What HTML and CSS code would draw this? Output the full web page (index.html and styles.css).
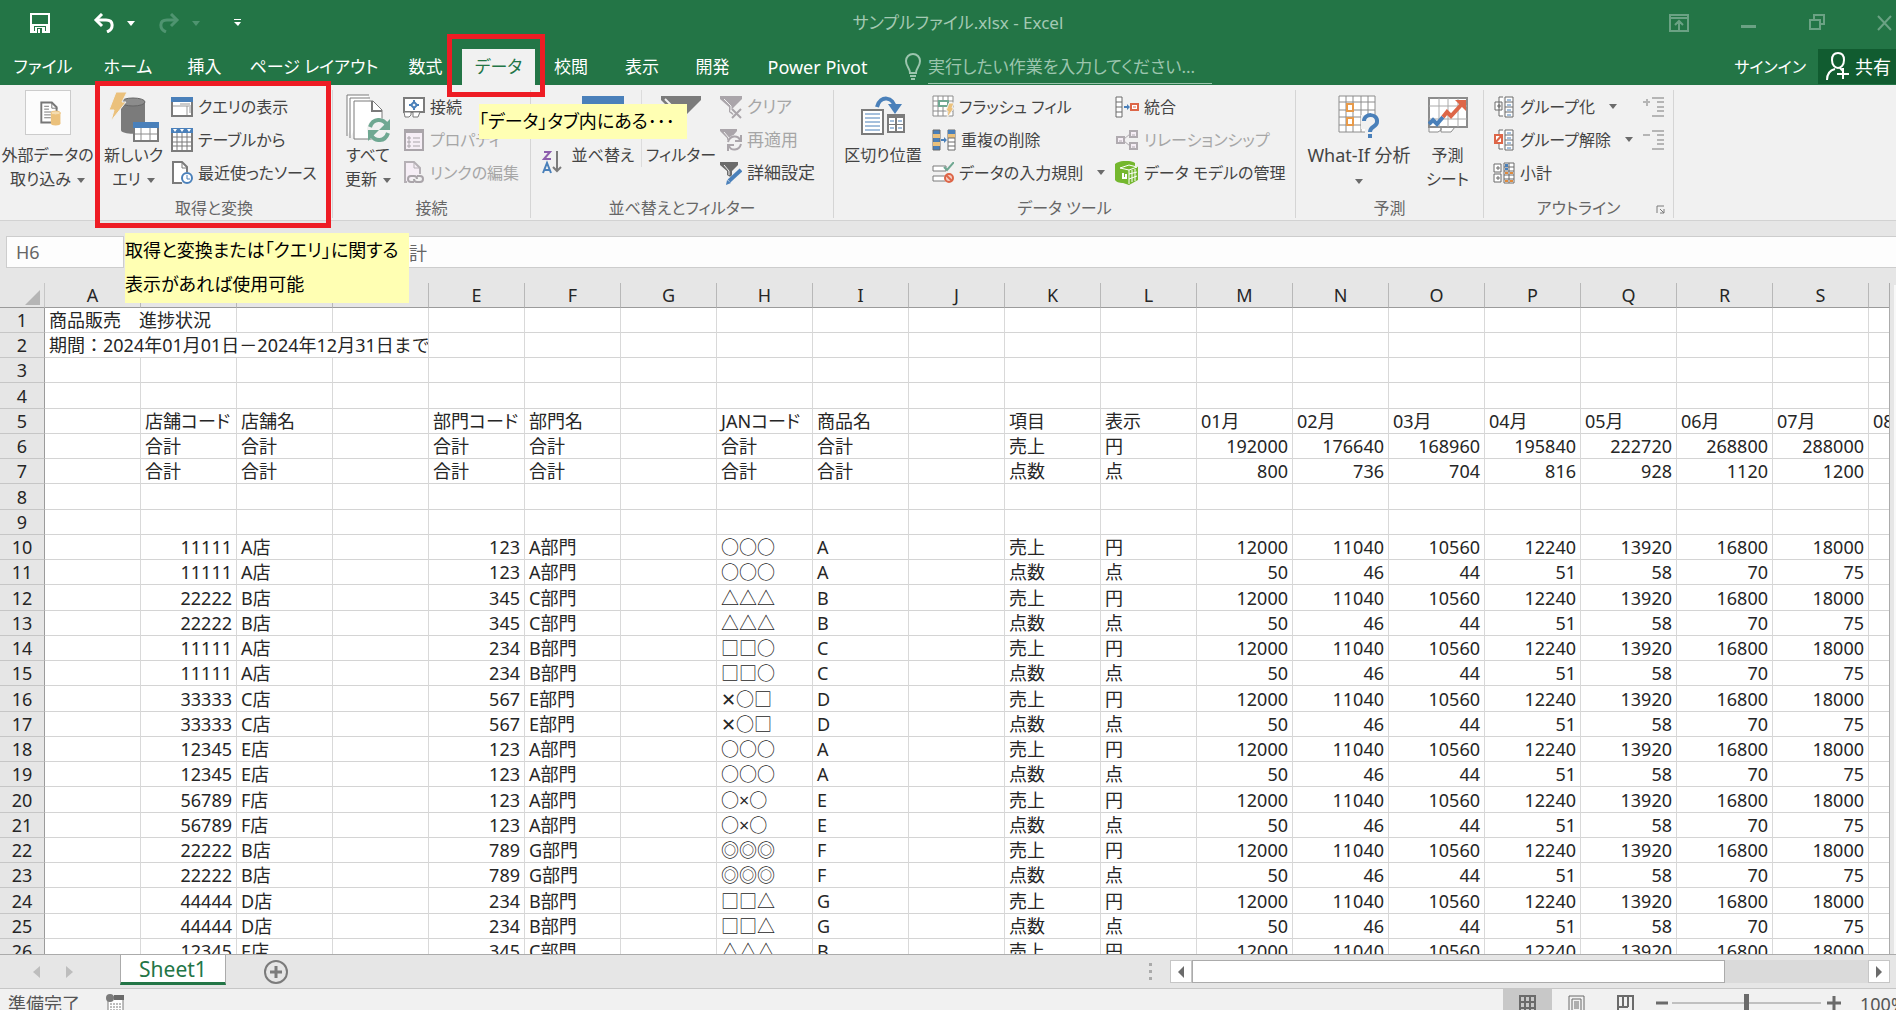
FILE: index.html
```html
<!DOCTYPE html>
<html lang="ja">

<head>
    <meta charset="UTF-8">
    <meta name="viewport" content="width=device-width, initial-scale=1.0">
    <title>サンプルファイル.xlsx - Excel</title>
    <link rel="stylesheet" href="styles.css">
</head>

<body>
    <!-- Title bar -->
    <header class="title-bar">
        <div class="quick-access">
            <button class="qa-button qa-save" aria-label="上書き保存">
                <svg width="20" height="20" viewBox="0 0 20 20"><path fill="none" stroke="#fff" stroke-width="2" d="M1 1h18v18H1z"/><path fill="#fff" d="M1 11h3v9H1zM16 11h3v9h-3zM1 11h18v2H1zM5 14h10v6H5z"/><path fill="#237546" d="M7 15h5v5H7z"/><path fill="#fff" d="M8 16h2v4H8z"/></svg>
            </button>
            <button class="qa-button qa-undo" aria-label="元に戻す">
                <svg width="22" height="20" viewBox="0 0 22 20"><path fill="none" stroke="#fff" stroke-width="3" d="M3 7h10c8 0 8 9 1 12"/><path fill="none" stroke="#fff" stroke-width="3" d="M9 1L3 7l6 6"/></svg>
                <svg width="8" height="5" viewBox="0 0 8 5"><path fill="#fff" d="M0 0h8L4 5z"/></svg>
            </button>
            <button class="qa-button qa-redo" aria-label="やり直し">
                <svg width="22" height="20" viewBox="0 0 22 20"><path fill="none" stroke="#4f9470" stroke-width="3" d="M19 7H9C1 7 1 16 8 19"/><path fill="none" stroke="#4f9470" stroke-width="3" d="M13 1l6 6-6 6"/></svg>
                <svg width="8" height="5" viewBox="0 0 8 5"><path fill="#4f9470" d="M0 0h8L4 5z"/></svg>
            </button>
            <button class="qa-button" aria-label="カスタマイズ">
                <svg width="8" height="8" viewBox="0 0 8 8"><path fill="#fff" d="M0 0h7v1H0zM0 3h7L4 7z"/></svg>
            </button>
        </div>
        <div class="file-title">サンプルファイル.xlsx - Excel</div>
        <div class="window-buttons">
            <button aria-label="リボンの表示オプション">
                <svg width="20" height="18" viewBox="0 0 20 18"><path fill="none" stroke="#6ba284" stroke-width="2" d="M1 1h18v16H1zM1 4h18M10 17V7M6 11l4-4 4 4"/></svg>
            </button>
            <button aria-label="最小化">
                <svg width="16" height="18" viewBox="0 0 16 18"><path fill="#6ba284" d="M0 11h15v3H0z"/></svg>
            </button>
            <button aria-label="元のサイズに戻す">
                <svg width="16" height="18" viewBox="0 0 16 18"><path fill="none" stroke="#6ba284" stroke-width="2" d="M1 6h10v9H1zM5 6V1h10v9h-4"/></svg>
            </button>
            <button aria-label="閉じる">
                <svg width="16" height="18" viewBox="0 0 16 18"><path fill="none" stroke="#6ba284" stroke-width="2" d="M1 2l13 14M14 2L1 16"/></svg>
            </button>
        </div>
    </header>

    <!-- Ribbon tabs -->
    <div class="tab-bar">
        <nav class="tabs">
            <button class="tab">ファイル</button>
            <button class="tab">ホーム</button>
            <button class="tab">挿入</button>
            <button class="tab">ページ レイアウト</button>
            <button class="tab">数式</button>
            <button class="tab active">データ</button>
            <button class="tab">校閲</button>
            <button class="tab">表示</button>
            <button class="tab">開発</button>
            <button class="tab latin">Power Pivot</button>
        </nav>
        <label class="tell-me">
            <svg width="16" height="28" viewBox="0 0 16 28"><path fill="none" stroke="#9cc5ae" stroke-width="2" d="M5 20c0-5-4-6-4-12a7 7 0 0 1 14 0c0 6-4 7-4 12zM5 23h6M6 26h4"/></svg>
            <input type="text" aria-label="操作アシスト" placeholder="実行したい作業を入力してください...">
        </label>
        <a href="#" class="sign-in">サインイン</a>
        <button class="share">
            <svg width="23" height="29" viewBox="0 0 23 29"><path fill="none" stroke="#fff" stroke-width="2" d="M1 28c0-7 4-10 8-11M12 1c-4 0-6 3-6 7 0 5 3 8 6 8s6-3 6-8c0-4-2-7-6-7zM14 16l3 3M17 16v11M11 22h12"/></svg>
            共有
        </button>
    </div>

    <!-- Ribbon -->
    <section class="ribbon">
        <div class="group external">
            <div class="group-body">
                <button class="big">
                    <span class="big-icon boxed">
                        <svg width="46" height="45" viewBox="0 0 46 45"><path fill="#fff" stroke="#777" stroke-width="2" d="M28 33H16V12h11l5 5v4"/><path fill="none" stroke="#777" d="M27 12v6h6M19 16h5M19 19h5M19 22h8M19 25h7M19 28h7"/><path fill="#ebc17c" d="M26 23h10v11H26z"/><ellipse cx="31" cy="23" rx="5" ry="2" fill="#f4dcb0" stroke="#ebc17c"/><ellipse cx="31" cy="34" rx="5" ry="2" fill="#ebc17c"/></svg>
                    </span>
                    <span>外部データの<br>取り込み<i class="caret"></i></span>
                </button>
            </div>
        </div>

        <div class="group get-transform">
            <div class="group-body">
                <button class="big">
                    <span class="big-icon">
                        <svg width="50" height="50" viewBox="0 0 50 50"><path fill="#7b7b7b" d="M12 10h24v28c0 5-24 5-24 0z"/><ellipse cx="24" cy="10" rx="12" ry="4" fill="#8c8c8c" stroke="#666"/><path fill="#ebc17c" stroke="#f1f1f1" d="M7 0h11l-5 10h4L2 29l3-11H0z"/><path fill="#fff" stroke="#7b7b7b" stroke-width="2" d="M25 31h24v18H25z"/><path fill="#4a80ba" d="M24 30h26v6H24z"/><path stroke="#8c8c8c" d="M26 42h22M32 36v12M41 36v12"/></svg>
                    </span>
                    <span>新しいク<br>エリ<i class="caret"></i></span>
                </button>
                <div class="small-list">
                    <button class="small">
                        <svg width="22" height="24" viewBox="0 0 22 24"><path fill="#fff" stroke="#7b7b7b" stroke-width="2" d="M1 3h20v18H1z"/><path fill="#4a80ba" d="M0 2h22v5H0z"/><path stroke="#999" d="M9 9h10M16 11v9M18 13h2M18 15h2M18 17h2M2 11h18"/></svg>
                        クエリの表示
                    </button>
                    <button class="small">
                        <svg width="22" height="24" viewBox="0 0 22 24"><path fill="#fff" stroke="#7b7b7b" stroke-width="2" d="M1 1h20v22H1z"/><path fill="#4a80ba" d="M0 0h22v5H0z"/><path fill="#fff" d="M2 1h4L4 4zM9 1h4l-2 3zM16 1h4l-2 3z"/><path stroke="#7b7b7b" d="M2 9h18M2 14h18M2 18h18M6 5v17M11 5v17M16 5v17"/></svg>
                        テーブルから
                    </button>
                    <button class="small">
                        <svg width="22" height="24" viewBox="0 0 22 24"><path fill="#fff" stroke="#7b7b7b" stroke-width="2" d="M11 22H2V1h9l5 5v5"/><path fill="none" stroke="#7b7b7b" d="M11 1v6h5"/><circle cx="16" cy="17" r="5" fill="#fff" stroke="#4a80ba" stroke-width="2"/><path fill="none" stroke="#4a80ba" d="M16 14v4h3"/></svg>
                        最近使ったソース
                    </button>
                </div>
            </div>
            <div class="group-title">取得と変換</div>
        </div>

        <div class="group connections">
            <div class="group-body">
                <button class="big">
                    <span class="big-icon">
                        <svg width="46" height="50" viewBox="0 0 46 50"><path fill="#fff" stroke="#7b7b7b" d="M2 44V3h22M5 46V6h20"/><path fill="#fff" stroke="#7b7b7b" d="M9 47V9h19l9 9v29z"/><path fill="none" stroke="#7b7b7b" stroke-width="2" d="M27 9v10h10"/><circle cx="34" cy="38" r="12" fill="#f1f1f1"/><path fill="none" stroke="#6fa892" stroke-width="4" d="M25 35c3-9 13-9 17-2M43 41c-3 9-13 9-17 2"/><path fill="#6fa892" d="M45 27v11H34zM23 49V38h11z"/></svg>
                    </span>
                    <span>すべて<br>更新<i class="caret"></i></span>
                </button>
                <div class="small-list">
                    <button class="small">
                        <svg width="22" height="24" viewBox="0 0 22 24"><path fill="#fff" stroke="#7b7b7b" stroke-width="2" d="M1 3h20v14H1z"/><path fill="#fff" stroke="#7b7b7b" stroke-width="1" d="M1 17h7v3l-2 2H2zM10 17h7l-2 5h-5z"/><path fill="none" stroke="#4a80ba" stroke-width="2" d="M11 7l3 3-3 3-3-3z"/><path fill="#4a80ba" d="M10 5h2v3h-2zM10 12h2v3h-2zM6 9h3v2H6zM13 9h3v2h-3z"/></svg>
                        接続
                    </button>
                    <button class="small" disabled>
                        <svg width="22" height="24" viewBox="0 0 22 24"><path fill="#f6eef6" stroke="#aaa5aa" stroke-width="2" d="M2 2h18v20H2z"/><path fill="#aaa5aa" d="M1 1h20v4H1z"/><path stroke="#aaa5aa" d="M10 10h7M10 14h7M10 18h7"/><path fill="none" stroke="#aaa5aa" d="M5 9h2v2H5zM5 13h2v2H5zM5 17h2v2H5z"/></svg>
                        プロパティ
                    </button>
                    <button class="small" disabled>
                        <svg width="22" height="24" viewBox="0 0 22 24"><path fill="#f6eef6" stroke="#b5b0b5" stroke-width="2" d="M4 21H2V1h9l6 6v6"/><path fill="none" stroke="#b5b0b5" d="M11 1v6h6"/><path fill="none" stroke="#aaa5aa" stroke-width="2" d="M11 21H8a3 3 0 0 1 0-6h3a3 3 0 0 1 3 3M14 15h3a3 3 0 0 1 0 6h-3a3 3 0 0 1-3-3"/></svg>
                        リンクの編集
                    </button>
                </div>
            </div>
            <div class="group-title">接続</div>
        </div>

        <div class="group sort-filter">
            <div class="group-body">
                <button class="sort-az" aria-label="降順">
                    <svg width="20" height="24" viewBox="0 0 20 24"><path fill="none" stroke="#8e5fae" stroke-width="2" d="M2 2h6L2 9h7"/><path fill="none" stroke="#4a80ba" stroke-width="2" d="M1 23l4-10 4 10M2 20h6"/><path fill="none" stroke="#7b7b7b" stroke-width="2" d="M15 1v20M11 17l4 4 4-4"/></svg>
                </button>
                <button class="big">
                    <span class="big-icon">
                        <svg width="42" height="42" viewBox="0 0 42 42"><path fill="#fff" stroke="#7b7b7b" d="M1 1h40v36H1z"/><path fill="#4a80ba" d="M0 0h42v8H0z"/><path stroke="#7b7b7b" d="M20 8v29"/></svg>
                    </span>
                    <span>並べ替え</span>
                </button>
                <button class="big divided">
                    <span class="big-icon">
                        <svg width="40" height="42" viewBox="0 0 40 42"><path fill="#7b7b7b" d="M0 0h40v4L24 20v20l-8-6V20L0 4z"/><path fill="none" stroke="#f1f1f1" stroke-width="2" d="M4 3l14 14"/></svg>
                    </span>
                    <span>フィルター</span>
                </button>
                <div class="small-list">
                    <button class="small" disabled>
                        <svg width="22" height="24" viewBox="0 0 22 24"><path fill="#aaa5aa" d="M0 1h22v3l-8 8v9l-5-4v-5L0 4z"/><path fill="none" stroke="#f1f1f1" d="M4 4l7 7v6"/><path stroke="#f1f1f1" stroke-width="5" d="M12 14l10 10M22 14L12 24"/><path stroke="#aaa5aa" stroke-width="2" d="M12 14l9 9M21 14l-9 9"/></svg>
                        クリア
                    </button>
                    <button class="small" disabled>
                        <svg width="22" height="24" viewBox="0 0 22 24"><path fill="#aaa5aa" d="M0 1h17v2l-6 7v5l-4-3v-2L0 3z"/><path fill="none" stroke="#f1f1f1" d="M4 4l5 6"/><circle cx="15" cy="15" r="8" fill="#f1f1f1"/><path fill="none" stroke="#aaa5aa" stroke-width="2" d="M8 14c2-7 10-7 12-2M21 16c-2 7-10 7-12 2M21 7v6h-6M8 23v-6h6"/></svg>
                        再適用
                    </button>
                    <button class="small">
                        <svg width="22" height="24" viewBox="0 0 22 24"><path fill="#6b6b6b" d="M0 1h18v3l-6 6v7l-5-3v-4L0 4z"/><path fill="none" stroke="#f1f1f1" d="M4 4l5 6v4"/><path stroke="#f1f1f1" stroke-width="6" d="M8 22L22 9"/><path stroke="#4a80ba" stroke-width="4" d="M9 20L21 9"/><path fill="#4a80ba" d="M6 24l1-5 4 3z"/></svg>
                        詳細設定
                    </button>
                </div>
            </div>
            <div class="group-title">並べ替えとフィルター</div>
        </div>

        <div class="group data-tools">
            <div class="group-body">
                <button class="big">
                    <span class="big-icon">
                        <svg width="44" height="42" viewBox="0 0 44 42"><path fill="none" stroke="#4a80ba" stroke-width="4" d="M16 11c3-12 17-11 18 2"/><path fill="#4a80ba" d="M27 8h14l-7 10z"/><path fill="#fff" stroke="#7b7b7b" stroke-width="2" d="M1 14h21v24H1z"/><path stroke="#4a80ba" stroke-width="1" d="M4 18h15M4 22h15M4 26h15M4 30h15M4 34h15"/><path fill="#fff" stroke="#7b7b7b" stroke-width="2" d="M27 19h16v17H27z"/><path fill="#7b7b7b" d="M26 18h18v4H26zM34 22h2v14h-2zM27 28h16v1H27z"/><path stroke="#4a80ba" stroke-width="1" d="M29 25h4M37 25h4M29 32h4M37 32h4"/></svg>
                    </span>
                    <span>区切り位置</span>
                </button>
                <div class="small-list">
                    <button class="small">
                        <svg width="22" height="24" viewBox="0 0 22 24"><path fill="#fff" stroke="#8c8c8c" d="M1 1h20v20H1zM1 6h20M1 11h20M1 16h20M6 1v20M16 1v20M11 1v20"/><path fill="#fff" stroke="#6fa892" stroke-width="2" d="M7 6h9v5H7z"/><path fill="#ebc17c" stroke="#f1f1f1" d="M17 8h5l-2 5h2l-7 10 1-7h-2z"/></svg>
                        フラッシュ フィル
                    </button>
                    <button class="small">
                        <svg width="24" height="22" viewBox="0 0 24 22"><path fill="#4a80ba" stroke="#6b6b6b" d="M1 1h7v20H1z"/><path fill="#ebc17c" d="M1 5h7v4H1zM1 13h7v4H1z"/><path fill="#fff" stroke="#6b6b6b" d="M16 1h7v20h-7z"/><path fill="#4a80ba" d="M16 1h7v4h-7z"/><path fill="#ebc17c" d="M16 5h7v4h-7z"/><path stroke="#6b6b6b" d="M16 13h7M16 17h7M16 9h7"/><path fill="#4a80ba" d="M9 10h3V8l3 3-3 3v-2H9z"/></svg>
                        重複の削除
                    </button>
                    <button class="small">
                        <svg width="22" height="22" viewBox="0 0 22 22"><path fill="#fff" stroke="#7b7b7b" d="M1 4h13v5H1zM1 14h13v5H1z"/><path fill="none" stroke="#6fa892" stroke-width="2" d="M12 5l3 3 7-8"/><circle cx="17" cy="16" r="5" fill="#f1f1f1"/><circle cx="17" cy="16" r="4" fill="#f5cfc5" stroke="#dd6648" stroke-width="2"/><path stroke="#dd6648" stroke-width="2" d="M14 13l6 6"/></svg>
                        データの入力規則<i class="caret far"></i>
                    </button>
                </div>
                <div class="small-list">
                    <button class="small">
                        <svg width="24" height="22" viewBox="0 0 24 22"><path fill="#fff" stroke="#6b6b6b" d="M1 1h6v20H1zM1 6h6M1 11h6M1 16h6"/><path fill="#4a80ba" d="M9 10h3V8l3 3-3 3v-2H9z"/><path fill="#fff" stroke="#dd6648" stroke-width="2" d="M16 8h7v6h-7z"/><path stroke="#dd6648" d="M18 11h3"/></svg>
                        統合
                    </button>
                    <button class="small" disabled>
                        <svg width="24" height="22" viewBox="0 0 24 22"><path fill="#f6eef6" stroke="#b0abb0" stroke-width="2" d="M2 8h7v6H2zM15 2h7v6h-7zM15 14h7v6h-7z"/><path stroke="#b0abb0" d="M9 10l6-5M9 12l6 5M4 12h3M17 6h3M17 18h3"/></svg>
                        リレーションシップ
                    </button>
                    <button class="small">
                        <svg width="24" height="24" viewBox="0 0 24 24"><path fill="#74b72e" d="M0 3C5-1 16-1 20 2v4L8 8v14c-4 0-7-1-8-3z"/><path fill="#74b72e" d="M5 7l10-4 8 3v13l-9 5-9-3z"/><path fill="none" stroke="#fff" d="M5 7l9 2v14M5 7l9-3 8 2-8 3M14 13l8-2M14 18l8-3M17 9v12M20 8v12"/><path fill="none" stroke="#fff" stroke-width="2" d="M8 12v5h3v-4"/></svg>
                        データ モデルの管理
                    </button>
                </div>
            </div>
            <div class="group-title">データ ツール</div>
        </div>

        <div class="group forecast">
            <div class="group-body">
                <button class="big latin">
                    <span class="big-icon">
                        <svg width="42" height="44" viewBox="0 0 42 44"><path fill="#fff" stroke="#8c8c8c" d="M1 1h36v36H1zM1 7h36M1 15h36M1 22h36M1 30h36M8 1v36M15 1v36M23 1v36M30 1v36"/><path fill="#fff" stroke="#e79a4a" stroke-width="2" d="M9 9h6v7H9zM9 23h6v7H9z"/><path fill="#f1f1f1" d="M23 20h19v24H27V34h-4z"/><path fill="none" stroke="#4a80ba" stroke-width="4" d="M26 26c0-8 14-8 13 1 0 5-7 4-7 10"/><path fill="#4a80ba" d="M30 39h4v4h-4z"/></svg>
                    </span>
                    <span>What-If 分析<br><i class="caret alone"></i></span>
                </button>
                <button class="big">
                    <span class="big-icon">
                        <svg width="40" height="42" viewBox="0 0 40 42"><path fill="#fff" stroke="#8c8c8c" d="M1 31h12v3l-3 2H1zM13 31h14l-4 5h-10z"/><path fill="#fff" stroke="#8c8c8c" stroke-width="2" d="M1 2h38v29H1z"/><path stroke="#aaa" d="M1 10h38M1 23h38M11 2v29M20 2v29M30 2v29"/><path fill="none" stroke="#4a80ba" stroke-width="4" d="M1 28l4-4 4 4 6-7"/><path fill="none" stroke="#dd6648" stroke-width="4" d="M15 21l4-5 4 4L34 8"/><path fill="#dd6648" d="M27 4h11v11z"/></svg>
                    </span>
                    <span>予測<br>シート</span>
                </button>
            </div>
            <div class="group-title">予測</div>
        </div>

        <div class="group outline">
            <div class="group-body">
                <div class="small-list">
                    <button class="small">
                        <svg width="22" height="22" viewBox="0 0 22 22"><path fill="#fff" stroke="#6b6b6b" d="M12 1h8v20h-8zM12 6h8M12 11h8M12 16h8M10 1H6v19h4M2 6h7v8H2z"/><path stroke="#4a80ba" d="M14 4h4M14 9h4M14 14h4M14 19h4"/><path stroke="#6b6b6b" d="M4 10h4M6 8v4"/></svg>
                        グループ化<i class="caret far"></i>
                    </button>
                    <button class="small">
                        <svg width="22" height="22" viewBox="0 0 22 22"><path fill="#fff" stroke="#6b6b6b" d="M12 1h8v20h-8zM12 6h8M12 11h8M12 16h8M10 1H6v19h4"/><path stroke="#4a80ba" d="M14 4h4M14 9h4M14 14h4M14 19h4"/><path fill="#fff" stroke="#dd6648" stroke-width="2" d="M2 6h7v8H2zM2 14l7-8"/></svg>
                        グループ解除<i class="caret far"></i>
                    </button>
                    <button class="small">
                        <svg width="22" height="22" viewBox="0 0 22 22"><path fill="#fff" stroke="#6b6b6b" d="M1 2h7v8H1zM1 12h7v8H1zM3 6h4M5 4v4M3 16h4M5 14v4M11 1h10v20H11zM11 5h10M11 9h10M11 13h10M11 17h10M16 1v20"/><path fill="#4a80ba" d="M12 2h3v3h-3zM12 6h3v2h-3z"/><path fill="#e08a3c" d="M12 10h3v2h-3zM17 10h3v2h-3zM12 18h3v2h-3zM17 18h3v2h-3z"/></svg>
                        小計
                    </button>
                </div>
                <div class="small-list">
                    <button class="small" disabled aria-label="詳細データの表示">
                        <svg width="22" height="22" viewBox="0 0 22 22"><path stroke="#b5b5b5" stroke-width="2" d="M9 2h12M14 6h7M14 11h7M14 15h7M9 20h12M0 6h7M4 3v7"/></svg>
                    </button>
                    <button class="small" disabled aria-label="詳細を表示しない">
                        <svg width="22" height="22" viewBox="0 0 22 22"><path stroke="#b5b5b5" stroke-width="2" d="M9 2h12M14 6h7M14 11h7M14 15h7M9 20h12M0 6h7"/></svg>
                    </button>
                </div>
            </div>
            <div class="group-title">アウトライン</div>
            <button class="launcher" aria-label="アウトラインの設定">
                <svg width="9" height="9" viewBox="0 0 9 9"><path fill="none" stroke="#7b7b7b" d="M1 8V1h7M4 4l4 4M8 4v4H4"/></svg>
            </button>
        </div>
    </section>

    <!-- Formula bar -->
    <div class="formula-bar">
        <input type="text" class="name-box" aria-label="名前ボックス" value="H6">
        <input type="text" class="formula" aria-label="数式バー" value="合計">
    </div>

    <!-- Worksheet -->
    <main class="sheet">
        <div class="sheet-view">
            <table class="grid">
                <thead>
                    <tr id="column-heads"></tr>
                </thead>
                <tbody id="rows"></tbody>
            </table>
        </div>
        <div class="v-scroll"></div>
    </main>

    <!-- Sheet tabs and horizontal scroll bar -->
    <div class="sheet-bar">
        <div class="sheet-nav">
            <button aria-label="前のシート"><svg width="7" height="12" viewBox="0 0 7 12"><path fill="#bdbdbd" d="M7 0v12L0 6z"/></svg></button>
            <button aria-label="次のシート"><svg width="7" height="12" viewBox="0 0 7 12"><path fill="#bdbdbd" d="M0 0v12l7-6z"/></svg></button>
        </div>
        <button class="sheet-tab">Sheet1</button>
        <button class="add-sheet" aria-label="新しいシート">
            <svg width="26" height="26" viewBox="0 0 26 26"><circle cx="13" cy="13" r="11" fill="none" stroke="#7b7b7b" stroke-width="2"/><path stroke="#7b7b7b" stroke-width="3" d="M7 13h12M13 7v12"/></svg>
        </button>
        <div class="dots"><svg width="4" height="18" viewBox="0 0 4 18"><path fill="#aaa" d="M0 0h3v3H0zM0 7h3v3H0zM0 14h3v3H0z"/></svg></div>
        <div class="h-scroll">
            <button aria-label="左へ"><svg width="6" height="12" viewBox="0 0 6 12"><path fill="#6b6b6b" d="M6 0v12L0 6z"/></svg></button>
            <div class="thumb"></div>
            <button aria-label="右へ"><svg width="6" height="12" viewBox="0 0 6 12"><path fill="#6b6b6b" d="M0 0v12l6-6z"/></svg></button>
        </div>
    </div>

    <!-- Status bar -->
    <footer class="status-bar">
        <span class="status-text">準備完了</span>
        <svg class="macro" width="20" height="20" viewBox="0 0 20 20"><path fill="#fff" stroke="#7b7b7b" d="M3 3h15v17H3z"/><path fill="#6b6b6b" d="M9 1h10v5H9z"/><circle cx="5" cy="4" r="4" fill="#7b7b7b"/><path stroke="#7b7b7b" stroke-dasharray="2 1" d="M5 10h12M5 13h12M5 16h12"/></svg>
        <div class="views">
            <button class="view current" aria-label="標準">
                <svg width="17" height="20" viewBox="0 0 17 20"><path fill="none" stroke="#6b6b6b" stroke-width="2" d="M1 1h15v18H1zM1 7h15M1 13h15M6 1v18M11 1v18"/></svg>
            </button>
            <button class="view" aria-label="ページ レイアウト">
                <svg width="17" height="20" viewBox="0 0 17 20"><path fill="none" stroke="#6b6b6b" d="M1 1h15v18H1zM4 4h9v12H4zM6 7h5M6 9h5M6 11h5M6 13h5"/></svg>
            </button>
            <button class="view" aria-label="改ページ プレビュー">
                <svg width="17" height="20" viewBox="0 0 17 20"><path fill="none" stroke="#6b6b6b" stroke-width="2" d="M1 1h15v18H1zM6 1v11M11 1v11M1 12h10"/></svg>
            </button>
        </div>
        <button class="zoom-step" aria-label="縮小"><svg width="12" height="14" viewBox="0 0 12 14"><path stroke="#6b6b6b" stroke-width="3" d="M0 7h12"/></svg></button>
        <input type="range" class="zoom" aria-label="ズーム" min="10" max="190" value="100">
        <button class="zoom-step" aria-label="拡大"><svg width="14" height="14" viewBox="0 0 14 14"><path stroke="#6b6b6b" stroke-width="3" d="M0 7h14M7 0v14"/></svg></button>
        <span class="zoom-value">100%</span>
    </footer>

    <!-- Callouts -->
    <div class="frame frame-tab"></div>
    <div class="frame frame-group"></div>
    <div class="note note-tab">「データ」タブ内にある･･･</div>
    <div class="note note-group">取得と変換または「クエリ」に関する<br>表示があれば使用可能</div>

    <script src="script.js"></script>
</body>

</html>
```

FILE: styles.css
```css
* {
    box-sizing: border-box;
}

body {
    margin: 0;
    height: 100vh;
    display: flex;
    flex-direction: column;
    position: relative;
    overflow: hidden;
    background-color: #e6e6e6;
    color: #444444;
    font-family: "Noto Sans", "Noto Sans CJK JP", sans-serif;
    font-size: 17px;
    line-height: 24px;
    font-feature-settings: "palt";
}

button,
input {
    font: inherit;
    color: inherit;
    font-feature-settings: inherit;
    background: none;
    border: none;
    border-radius: 0;
    padding: 0;
    margin: 0;
}

button {
    white-space: nowrap;
}

svg {
    display: block;
    flex-shrink: 0;
}

/* Title bar */
.title-bar {
    flex: 0 0 49px;
    display: grid;
    grid-template-columns: 1fr auto 1fr;
    align-items: center;
    padding-bottom: 3px;
    background-color: #237546;
    color: #a4c9b3;
}

.file-title {
    padding-left: 20px;
}

.quick-access {
    display: flex;
    align-items: center;
    padding-left: 30px;
}

.qa-button {
    display: flex;
    align-items: center;
    gap: 12px;
}

.qa-save {
    margin-right: 43px;
}

.qa-undo {
    margin-right: 23px;
}

.qa-redo {
    margin-right: 34px;
}

.window-buttons {
    display: flex;
    justify-content: flex-end;
    gap: 52px;
    padding-right: 3px;
}

/* Ribbon tabs */
.tab-bar {
    flex: 0 0 36px;
    display: flex;
    background-color: #237546;
    color: #ffffff;
}

.tabs {
    display: grid;
    grid-template-columns: 86px 84px 69px 150px 73px 73px 72px 70px 71px 139px;
}

.latin {
    font-size: 18px;
}

.tab.active {
    background-color: #f1f1f1;
    color: #237546;
}

.tell-me {
    display: flex;
    align-items: center;
    gap: 7px;
    margin-left: 18px;
    color: #9cc5ae;
}

.tell-me input {
    width: 284px;
    height: 34px;
    border-bottom: 1px solid #9cc5ae;
}

.tell-me input::placeholder {
    color: #9cc5ae;
    opacity: 1;
}

.sign-in {
    margin-left: auto;
    padding: 6px 12px;
    color: #ffffff;
    font-size: 16px;
    text-decoration: none;
}

.share {
    display: flex;
    align-items: center;
    gap: 6px;
    height: 35px;
    padding: 0 5px 0 8px;
    background-color: #115c30;
    font-size: 18px;
}

/* Ribbon */
.ribbon {
    flex: 0 0 136px;
    display: grid;
    grid-template-columns: 96px 237px 198px 303px 462px 188px 190px;
    padding: 5px 0 0;
    background-color: #f1f1f1;
    border-bottom: 1px solid #d2d2d2;
    font-size: 16px;
}

.group {
    display: flex;
    flex-direction: column;
    position: relative;
    height: 128px;
    border-right: 1px solid #d5d5d5;
}

.group-body {
    flex: 1;
    display: grid;
    align-items: start;
}

.external .group-body {
    grid-template-columns: 1fr;
}

.get-transform .group-body {
    grid-template-columns: 75px 1fr;
}

.connections .group-body {
    grid-template-columns: 70px 1fr;
}

.sort-filter .group-body {
    grid-template-columns: 34px 76px 79px 1fr;
}

.data-tools .group-body {
    grid-template-columns: 98px 183px 1fr;
}

.forecast .group-body {
    grid-template-columns: 126px 51px;
}

.outline .group-body {
    grid-template-columns: 150px 1fr;
    padding-left: 9px;
}

.group-title {
    line-height: 20px;
    text-align: center;
    color: #666666;
}

.big {
    display: flex;
    flex-direction: column;
    align-items: center;
}

.big-icon {
    display: flex;
    align-items: center;
    height: 53px;
}

.boxed {
    align-items: flex-start;
}

.boxed svg {
    background-color: #fcfcfc;
    border: 1px solid #cccccc;
}

.divided {
    border-left: 1px solid #dcdcdc;
}

.sort-az {
    padding: 60px 0 0 11px;
}

.small {
    display: flex;
    align-items: center;
    gap: 5px;
    height: 33px;
}

.sort-filter .small {
    font-size: 17px;
}

.small:disabled {
    color: #a6a6a6;
}

.caret {
    display: inline-block;
    margin-left: 6px;
    vertical-align: middle;
    border: 4px solid transparent;
    border-top: 5px solid #6b6b6b;
    border-bottom: none;
}

.caret.far {
    margin-left: 9px;
}

.caret.alone {
    margin-left: 0;
}

.launcher {
    position: absolute;
    right: 8px;
    bottom: 4px;
}

/* Formula bar */
.formula-bar {
    flex: 0 0 62px;
    display: flex;
    gap: 8px;
    padding: 15px 0;
    font-size: 18px;
    color: #666666;
}

.formula-bar input {
    height: 32px;
    background-color: #fdfdfd;
    border: 1px solid #cdcdcd;
}

.name-box {
    width: 118px;
    margin-left: 6px;
    padding-left: 9px;
}

.formula-bar .formula {
    flex: 1;
    border-right: none;
    padding-left: 258px;
}

/* Worksheet */
.sheet {
    flex: 1;
    min-height: 0;
    display: flex;
}

.sheet-view {
    flex: 1;
    min-width: 0;
    overflow: hidden;
    border-right: 1px solid #ababab;
}

.v-scroll {
    width: 6px;
    margin-top: 2px;
    border-right: 2px solid #f8f8f8;
}

.grid {
    width: 1965px;
    table-layout: fixed;
    border-collapse: separate;
    border-spacing: 0;
    background-color: #ffffff;
    color: #262626;
    font-size: 18px;
    line-height: 24px;
}

.grid th {
    padding: 0;
    background-color: #e6e6e6;
    font-weight: normal;
    border-right: 1px solid #b8b8b8;
    border-bottom: 1px solid #9b9b9b;
}

.grid tr {
    height: 25px;
}

/* keeps the average row height a little over 25px */
.grid tbody tr:nth-child(4n) {
    height: 26px;
}

.grid .corner {
    width: 45px;
    border-right-color: #c6c6c6;
}

.corner svg {
    margin: 5px 4px 0 auto;
}

.grid tbody th {
    border-right-color: #9b9b9b;
    border-bottom-color: #c6c6c6;
}

.grid td {
    padding: 0 4px;
    overflow: hidden;
    white-space: nowrap;
    border-right: 1px solid #d9d9d9;
    border-bottom: 1px solid #d4d4d4;
}

.grid td[colspan] {
    font-feature-settings: normal;
}

.grid .number {
    text-align: right;
}

/* Sheet tabs */
.sheet-bar {
    flex: 0 0 35px;
    display: flex;
    align-items: center;
    border-top: 1px solid #ababab;
    border-bottom: 1px solid #c6c6c6;
}

.sheet-nav {
    display: flex;
    gap: 26px;
    width: 120px;
    padding-left: 33px;
}

.sheet-tab {
    align-self: flex-start;
    width: 106px;
    height: 30px;
    background-color: #ffffff;
    border: 1px solid #ababab;
    border-top: none;
    border-bottom: 3px solid #237546;
    color: #237546;
    font-size: 21px;
    line-height: 24px;
}

.add-sheet {
    margin-left: 37px;
}

.dots {
    margin-left: auto;
    margin-right: 17px;
}

.h-scroll {
    flex: 0 0 38%;
    display: flex;
    height: 23px;
    margin-right: 6px;
    background-color: #dadada;
}

.h-scroll button {
    display: flex;
    align-items: center;
    justify-content: center;
    width: 22px;
    background-color: #ffffff;
    border: 1px solid #c6c6c6;
}

.thumb {
    width: 74%;
    margin-right: auto;
    background-color: #ffffff;
    border: 1px solid #ababab;
}

/* Status bar */
.status-bar {
    flex: 0 0 21px;
    display: flex;
    align-items: flex-start;
    overflow: hidden;
    background-color: #f1f1f1;
    font-size: 18px;
    color: #555555;
}

.status-text,
.zoom-value {
    padding-top: 3px;
}

.status-text {
    padding-left: 8px;
}

.macro {
    margin: 5px 0 0 25px;
}

.views {
    display: flex;
    margin-left: auto;
}

.view {
    display: flex;
    justify-content: center;
    width: 49px;
    height: 34px;
    padding-top: 6px;
}

.view.current {
    background-color: #c8c8c8;
}

.zoom-step {
    margin-top: 7px;
}

.zoom-step:first-of-type {
    margin-left: 6px;
}

.zoom {
    appearance: none;
    width: 149px;
    height: 20px;
    margin: 4px 6px 0 4px;
}

.zoom::-webkit-slider-runnable-track {
    height: 2px;
    background-color: #c0c0c0;
}

.zoom::-webkit-slider-thumb {
    appearance: none;
    width: 5px;
    height: 18px;
    margin-top: -8px;
    background-color: #6b6b6b;
}

.zoom-value {
    width: 36px;
    margin-left: 19px;
    overflow: hidden;
}

/* Callouts */
.frame {
    position: absolute;
    border: 5px solid #ee1c24;
    pointer-events: none;
}

.frame-tab {
    left: 447px;
    top: 34px;
    width: 98px;
    height: 63px;
}

.frame-group {
    left: 95px;
    top: 81px;
    width: 236px;
    height: 147px;
}

.note {
    position: absolute;
    background-color: #ffffb3;
    color: #000000;
    font-size: 18px;
    white-space: nowrap;
}

.note-tab {
    left: 479px;
    top: 104px;
    width: 208px;
    height: 35px;
    line-height: 35px;
}

.note-group {
    left: 125px;
    top: 233px;
    width: 284px;
    height: 70px;
    line-height: 34px;
}
```

FILE: script.js
```js
var letters = 'ABCDEFGHIJKLMNOPQRST'.split('');

// monthly figures, columns M to S
var sales = [12000, 11040, 10560, 12240, 13920, 16800, 18000];
var counts = [50, 46, 44, 51, 58, 70, 75];

// store code, store, department code, department, JAN code, item
var items = [
    [11111, 'A店', 123, 'A部門', '○○○', 'A'],
    [22222, 'B店', 345, 'C部門', '△△△', 'B'],
    [11111, 'A店', 234, 'B部門', '□□○', 'C'],
    [33333, 'C店', 567, 'E部門', '✕○□', 'D'],
    [12345, 'E店', 123, 'A部門', '○○○', 'A'],
    [56789, 'F店', 123, 'A部門', '○×○', 'E'],
    [22222, 'B店', 789, 'G部門', '◎◎◎', 'F'],
    [44444, 'D店', 234, 'B部門', '□□△', 'G'],
    [12345, 'E店', 345, 'C部門', '△△△', 'B']
];

function line(v, kind, unit, figures) {
    return ['', v[0], v[1], '', v[2], v[3], '', v[4], v[5], '', kind, unit].concat(figures);
}

var total = ['合計', '合計', '合計', '合計', '合計', '合計'];
var rows = [
    [{ text: '商品販売　進捗状況', span: 2 }],
    [{ text: '期間：2024年01月01日－2024年12月31日まで', span: 4 }],
    [],
    [],
    line(['店舗コード', '店舗名', '部門コード', '部門名', 'JANコード', '商品名'], '項目', '表示',
        ['01月', '02月', '03月', '04月', '05月', '06月', '07月', '08月']),
    line(total, '売上', '円', [192000, 176640, 168960, 195840, 222720, 268800, 288000]),
    line(total, '点数', '点', [800, 736, 704, 816, 928, 1120, 1200]),
    [],
    []
];

items.forEach(function (item) {
    rows.push(line(item, '売上', '円', sales));
    rows.push(line(item, '点数', '点', counts));
});

// Column letters
document.getElementById('column-heads').innerHTML =
    '<th class="corner"><svg width="15" height="15" viewBox="0 0 15 15"><path fill="#b5b5b5" d="M15 0v15H0z"/></svg></th>' +
    letters.map(function (l) { return '<th>' + l + '</th>'; }).join('');

// Rows
document.getElementById('rows').innerHTML = rows.map(function (row, i) {
    var html = '<tr><th>' + (i + 1) + '</th>';
    var col = 0;
    var n = 0;
    while (col < letters.length) {
        var cell = row[n] === undefined ? '' : row[n];
        var span = cell.span || 1;
        html += '<td' + (span > 1 ? ' colspan="' + span + '"' : '') +
            (typeof cell === 'number' ? ' class="number"' : '') + '>' +
            (cell.text || cell) + '</td>';
        col += span;
        n++;
    }
    return html + '</tr>';
}).join('');
```
